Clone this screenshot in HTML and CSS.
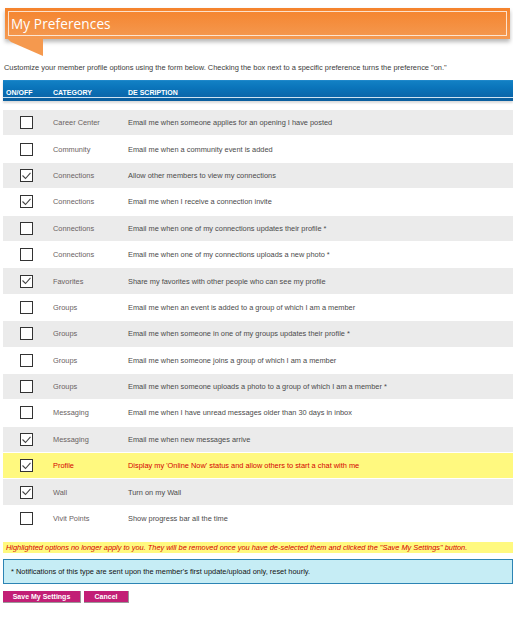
FILE: index.html
```html
<!DOCTYPE html>
<html>
<head>
<meta charset="utf-8">
<link rel="stylesheet" href="styles.css">
</head>
<body>
<div class="page">
  <div class="banner">
    <div class="banner-inner"><h1 class="title">My Preferences</h1></div>
  </div>
  <svg class="fold" width="40" height="18" viewBox="0 0 40 18"><polygon points="0,0 35,0 35,17 3,3" fill="#f5994e"/></svg>
  <p class="intro">Customize your member profile options using the form below. Checking the box next to a specific preference turns the preference "on."</p>

  <div class="prefs">
    <div class="head">
      <span class="c1">ON/OFF</span><span class="c2">CATEGORY</span><span class="c3">DE SCRIPTION</span>
    </div>
    <div class="rows">
      <div class="row gray"><span class="c1"><span class="cb"></span></span><span class="c2">Career Center</span><span class="c3">Email me when someone applies for an opening I have posted</span></div>
      <div class="row"><span class="c1"><span class="cb"></span></span><span class="c2">Community</span><span class="c3">Email me when a community event is added</span></div>
      <div class="row gray"><span class="c1"><span class="cb on"><svg viewBox="0 0 13 13"><polyline points="2.5,6.5 5.5,9.5 10.5,3.8"/></svg></span></span><span class="c2">Connections</span><span class="c3">Allow other members to view my connections</span></div>
      <div class="row"><span class="c1"><span class="cb on"><svg viewBox="0 0 13 13"><polyline points="2.5,6.5 5.5,9.5 10.5,3.8"/></svg></span></span><span class="c2">Connections</span><span class="c3">Email me when I receive a connection invite</span></div>
      <div class="row gray"><span class="c1"><span class="cb"></span></span><span class="c2">Connections</span><span class="c3">Email me when one of my connections updates their profile *</span></div>
      <div class="row"><span class="c1"><span class="cb"></span></span><span class="c2">Connections</span><span class="c3">Email me when one of my connections uploads a new photo *</span></div>
      <div class="row gray"><span class="c1"><span class="cb on"><svg viewBox="0 0 13 13"><polyline points="2.5,6.5 5.5,9.5 10.5,3.8"/></svg></span></span><span class="c2">Favorites</span><span class="c3">Share my favorites with other people who can see my profile</span></div>
      <div class="row"><span class="c1"><span class="cb"></span></span><span class="c2">Groups</span><span class="c3">Email me when an event is added to a group of which I am a member</span></div>
      <div class="row gray"><span class="c1"><span class="cb"></span></span><span class="c2">Groups</span><span class="c3">Email me when someone in one of my groups updates their profile *</span></div>
      <div class="row"><span class="c1"><span class="cb"></span></span><span class="c2">Groups</span><span class="c3">Email me when someone joins a group of which I am a member</span></div>
      <div class="row gray"><span class="c1"><span class="cb"></span></span><span class="c2">Groups</span><span class="c3">Email me when someone uploads a photo to a group of which I am a member *</span></div>
      <div class="row"><span class="c1"><span class="cb"></span></span><span class="c2">Messaging</span><span class="c3">Email me when I have unread messages older than 30 days in inbox</span></div>
      <div class="row gray"><span class="c1"><span class="cb on"><svg viewBox="0 0 13 13"><polyline points="2.5,6.5 5.5,9.5 10.5,3.8"/></svg></span></span><span class="c2">Messaging</span><span class="c3">Email me when new messages arrive</span></div>
      <div class="row hl"><span class="c1"><span class="cb on"><svg viewBox="0 0 13 13"><polyline points="2.5,6.5 5.5,9.5 10.5,3.8"/></svg></span></span><span class="c2">Profile</span><span class="c3">Display my 'Online Now' status and allow others to start a chat with me</span></div>
      <div class="row gray"><span class="c1"><span class="cb on"><svg viewBox="0 0 13 13"><polyline points="2.5,6.5 5.5,9.5 10.5,3.8"/></svg></span></span><span class="c2">Wall</span><span class="c3">Turn on my Wall</span></div>
      <div class="row"><span class="c1"><span class="cb"></span></span><span class="c2">Vivit Points</span><span class="c3">Show progress bar all the time</span></div>
    </div>
  </div>

  <p class="warn">Highlighted options no longer apply to you. They will be removed once you have de-selected them and clicked the "Save My Settings" button.</p>
  <div class="note">* Notifications of this type are sent upon the member's first update/upload only, reset hourly.</div>
  <div class="actions">
    <button class="btn save">Save My Settings</button>
    <button class="btn cancel">Cancel</button>
  </div>
</div>
</body>
</html>
```

FILE: styles.css
```css
html, body { margin: 0; padding: 0; background: #fff; }
body { font-family: "Liberation Sans", Arial, sans-serif; }
.page { padding: 8px 0 0 3px; width: 510px; }

.banner {
  margin-left: 2px;
  width: 505px;
  height: 31px;
  box-sizing: border-box;
  padding: 3px;
  background: linear-gradient(#f5832c, #f49a52);
  box-shadow: 0 3px 4px rgba(0,0,0,0.28);
}
.banner-inner {
  height: 100%;
  box-sizing: border-box;
  border: 1px solid rgba(255,255,255,0.75);
  display: flex;
  align-items: center;
  padding-left: 2px;
}
.title {
  margin: 0;
  font-family: "Open Sans", "DejaVu Sans", sans-serif;
  font-weight: normal;
  font-size: 13.6px;
  color: #fff;
  letter-spacing: 0.1px;
}
.fold { display: block; margin-left: 5px; }

.intro {
  margin: 6px 0 0 1px;
  font-size: 7.45px;
  color: #3c3c3c;
}

.prefs { margin-top: 8px; }
.head {
  display: flex;
  align-items: flex-end;
  height: 21px;
  box-sizing: border-box;
  background: linear-gradient(#2a8fd0 0, #1280c4 1px, #0a74ba 8px, #0a64a8 100%);
  border-bottom: 3px solid #0a5f9f;
  box-shadow: 0 2px 2px rgba(0,0,0,0.15), inset 0 -1px 0 #cfe3f2;
  color: #fff;
  font-weight: bold;
  font-size: 7px;
  padding-bottom: 2px;
}
.head .c1 { padding-left: 3px; box-sizing: border-box; }
.c1 { width: 50px; flex: none; }
.c2 { width: 75px; flex: none; }
.c3 { flex: 1; }

.rows { margin-top: 9px; }
.row {
  display: flex;
  align-items: center;
  height: 26.4px;
  box-sizing: border-box;
  border-bottom: 1px solid #fff;
  font-size: 7.4px;
  color: #6a6262;
}
.row .c3 { color: #4a4a4a; }
.row.gray { background: #ebebeb; }
.row.hl { background: #fff97f; }
.row.hl .c2, .row.hl .c3 { color: #d40000; }
.row .c1 { display: flex; padding-left: 17px; box-sizing: border-box; }
.cb {
  width: 13px;
  height: 13px;
  box-sizing: border-box;
  border: 1.3px solid #333;
  background: #fff;
  display: block;
}
.cb svg { display: block; margin: -1.3px; width: 13px; height: 13px; }
.cb polyline { fill: none; stroke: #444; stroke-width: 1.1; }

.warn {
  margin: 10px 0 0 0;
  background: #fff97f;
  color: #d40000;
  font-style: italic;
  font-size: 7.4px;
  padding: 1px 3px 1px 3px;
  line-height: 9px;
}
.note {
  margin-top: 6px;
  height: 25px;
  box-sizing: border-box;
  border: 1px solid #2c84b4;
  background: #c6edf5;
  color: #111;
  font-size: 7.4px;
  display: flex;
  align-items: center;
  padding-left: 7px;
}
.actions { display: flex; gap: 3px; margin-top: 7px; }
.btn {
  margin: 0;
  height: 12px;
  padding: 0;
  border: none;
  border-right: 1px solid #999;
  border-bottom: 1px solid #999;
  background: #c21f76;
  color: #fff;
  font-family: "Liberation Sans", Arial, sans-serif;
  font-weight: bold;
  font-size: 7px;
  line-height: 11px;
  cursor: pointer;
}
.save { width: 78px; }
.cancel { width: 45px; }
```
